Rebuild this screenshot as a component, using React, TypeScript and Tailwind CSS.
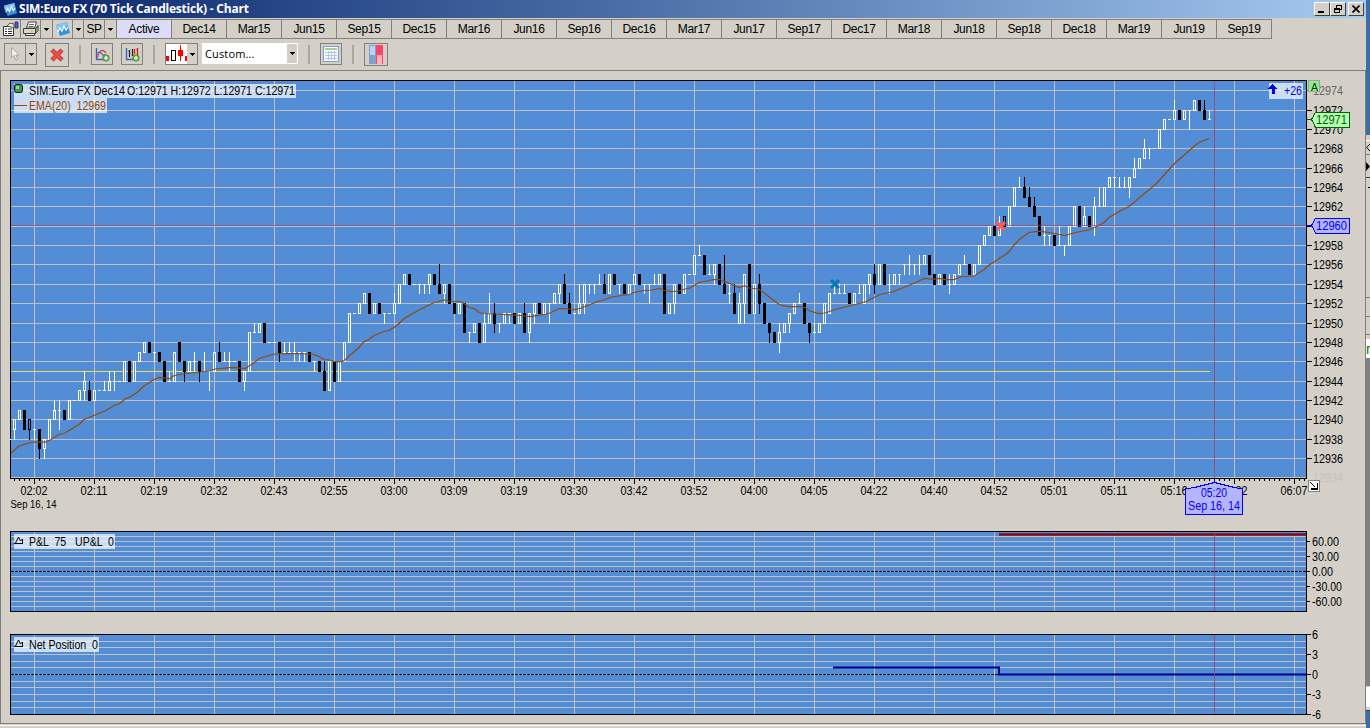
import React from 'react';

// open, high, low, close (ticks above 12900)
const CANDLES = `
39 40 38 40|40 41 40 41|41 41 39 39|39 40 38 40 b|39 39 38 39|39 39 36 37|37 38 36 38|38 40 38 40|40 42 40 41|41 42 39 41
41 41 40 40|40 42 40 42|42 42 42 42|42 43 42 43|43 45 42 44|43 44 42 42|42 43 42 43|43 43 43 43|43 44 43 43|43 45 43 44
44 45 43 44|44 44 44 44|44 46 44 46|46 46 44 44|44 46 44 46|46 47 46 47|47 48 47 48|48 48 47 47|47 47 46 47|47 47 46 46
46 46 44 44|44 45 44 44|44 47 44 47|48 48 46 46|46 46 44 45|45 46 45 46|46 47 45 46|46 46 44 45|45 47 45 45|45 45 43 45
45 47 45 47|47 48 46 46|46 47 46 46|46 47 45 46|46 46 46 46|46 46 44 44|44 45 43 45|45 49 45 49|49 50 49 49|49 50 49 50
50 50 48 48|48 48 48 48|48 48 48 48|48 48 46 47|47 48 47 47|47 48 47 47|47 48 46 47|47 47 46 47|47 47 46 47|47 47 46 46
46 46 45 46|46 46 45 45|45 46 43 43|43 46 43 46|46 46 44 44|44 46 44 46|46 48 46 48|48 51 48 51|51 51 51 51|51 52 51 52
52 53 52 53|53 53 51 51|51 52 51 52|52 52 51 51|51 51 50 51|51 51 51 51|51 53 51 52|52 54 52 54|54 55 54 55|55 55 54 54
54 54 54 54|54 54 53 54|54 54 53 54|54 55 53 55|55 55 54 54|54 56 53 53|53 54 52 54|54 54 52 52|52 52 51 51|51 52 51 52
52 52 49 49|49 49 48 49|49 50 49 50|50 50 48 48|48 51 48 50|50 53 50 51|51 52 49 50|50 50 49 50|50 51 50 51|51 51 50 51
51 51 50 50|50 51 50 51|51 52 49 49|49 51 48 51|51 52 50 52|52 52 51 51|51 52 51 52|52 52 50 52|52 53 52 53|53 54 52 54
54 55 52 52|52 53 51 51|51 51 51 51|51 54 51 52|52 54 51 54|54 54 53 54|54 54 53 54|54 55 54 54|54 55 53 53|53 55 53 55
55 55 54 54|54 54 53 54|54 54 53 53|53 54 53 54|54 55 54 55|55 55 54 54|54 54 53 54|54 54 52 54|54 55 54 54|54 55 54 55
55 55 51 51|51 52 51 52|52 54 51 54|54 54 53 53|53 55 53 55|55 55 55 55|55 57 55 57|57 58 57 57|57 57 55 55|55 56 55 55
55 56 54 56|56 56 54 54|54 57 53 53|53 54 52 53|53 54 51 51|50 53 50 52|52 55 50 55|56 56 51 51|51 54 51 54|54 55 51 52
52 52 50 50|50 50 48 49|49 49 48 48|48 50 47 49|49 50 49 50|50 51 49 51|51 52 51 52|52 53 52 52|52 52 50 50|50 50 48 49
49 50 49 49|49 50 49 50|50 52 50 52|51 53 51 53|53 54 53 53|53 54 53 53|53 54 53 53|53 53 52 52|52 53 52 53|53 54 53 53
52 54 52 54|54 55 53 55|55 56 53 54|54 56 54 56|56 56 54 54|54 55 53 54|54 55 54 55|55 55 54 55|56 56 55 56|56 57 55 56
56 56 55 56|56 57 55 56|56 57 56 57|57 57 55 55|55 55 54 54|54 55 54 55|55 55 54 54|54 55 53 54|54 55 54 55|55 56 55 56
56 57 56 56|56 56 55 55|55 56 55 56|56 58 56 58|58 59 58 59|59 60 59 60|60 60 59 59|59 61 59 60|60 61 60 61 b|60 62 60 62
62 64 62 64|64 65 64 64|64 65 63 63|63 64 62 62|62 63 61 61|61 61 59 59|59 60 58 59|59 59 58 59|59 59 58 58|58 60 58 58
58 58 57 58|58 60 58 60|60 62 60 62|62 62 60 60|60 62 60 61|61 61 60 60|60 63 59 62|62 64 62 62|62 64 62 64|64 65 64 65
65 65 64 65|64 65 64 64|64 65 64 64|64 65 63 65|65 67 65 66|66 67 66 67|67 69 67 68|68 68 67 68|68 68 68 68|68 70 68 70
70 71 70 71|71 71 71 71|71 73 71 72|72 72 71 71|71 72 71 72|72 72 70 72|72 73 72 73|73 73 72 72|72 73 71 71|71 72 71 71
`
  .trim()
  .split(/[|\n]/)
  .map((row) => {
    const [o, h, l, c, flag] = row.split(' ');
    return { o: +o, h: +h, l: +l, c: +c, dark: flag === 'b' };
  });

const EMA =
  '11,453 19,446 29,443 34,442 46,442 50,440 59,434.5 64,433.5 79,424.5 84,419.5 95,415 105,411 115,405 119,404 125,399 129,397.5 137,392.5 144,386 154,379.5 159,377.5 170,378.5 174,375.5 184,374 199,372 210,371 215,369 232,367.5 245,368.5 249,366 254,363 259,358.5 269,355.5 275,354 285,353.5 300,353.5 314,354.5 319,356.5 324,359.5 329,360 334,361.5 342,361.5 345,360 349,356 354,352 359,347.5 364,341.5 369,339.5 374,335.5 384,331.5 389,330.5 394,327.5 398,324.5 404,318.5 419,310 434,302.5 439,301.5 444,300 449,301 460,301.5 465,304 469,307.5 475,309 479,312.5 484,313.5 504,314.5 520,315.5 530,316.5 540,315.2 549,313.5 555,310.5 559,308.5 564,308.5 574,309.5 580,308.5 599,301 604,300 610,297.5 618,296 629,294.5 634,292.5 644,290.5 652,290 659,288.5 664,290.5 672,291.5 679,291 685,289 690,288 699,282.5 714,279.5 720,279.5 724,281 732,284.5 739,287.5 745,286 749,288 758,289 763,292 779,304.5 788,306.5 800,306.5 805,307.5 810,311 819,313.5 825,313 835,309.5 849,306 865,302 873,298 880,294.5 892,292 905,287 919,281 924,278.5 934,279 939,278.5 945,279.5 954,279.5 960,277 974,276 984,269.5 989,265 994,262 1000,258 1005,255 1010,250.5 1014,245 1020,239 1029,232.5 1039,231.2 1055,233.5 1065,235.5 1075,232.5 1089,230 1094,227.5 1099,225.5 1104,222.5 1109,217.5 1120,211 1129,206.5 1144,194 1157,183 1165,174 1175,163 1190,150 1195,145.5 1200,142 1209,138.5';

const TIMES = ['02:02', '02:11', '02:19', '02:32', '02:43', '02:55', '03:00', '03:09', '03:19', '03:30', '03:42', '03:52', '04:00', '04:05', '04:22', '04:40', '04:52', '05:01', '05:11', '05:16', '05:22', '06:07'];

const CONTRACTS = ['Active', 'Dec14', 'Mar15', 'Jun15', 'Sep15', 'Dec15', 'Mar16', 'Jun16', 'Sep16', 'Dec16', 'Mar17', 'Jun17', 'Sep17', 'Dec17', 'Mar18', 'Jun18', 'Sep18', 'Dec18', 'Mar19', 'Jun19', 'Sep19'];

const PLOT_LEFT = 10;
const PLOT_RIGHT = 1306;
const GRID = '#c0c0c0';
const PLOT_BG = '#538dd5';

const priceY = (p: number) => Math.floor(90.7 + (74 - p) * 9.68);

type LabelProps = {
  x: number;
  y: number;
  w: number;
  children: string;
  fill?: string;
  size?: number;
};

const Label = ({ x, y, w, children, fill = '#000', size = 12 }: LabelProps) => (
  <text x={x} y={y} fontSize={size} fill={fill} textLength={w} lengthAdjust="spacingAndGlyphs" xmlSpace="preserve">
    {children}
  </text>
);

type PlotProps = { top: number; bottom: number; rows: number[] };

const PlotGrid = ({ top, bottom, rows }: PlotProps) => (
  <>
    <rect x={PLOT_LEFT} y={top} width={PLOT_RIGHT - PLOT_LEFT + 1} height={bottom - top + 1} fill="#000" />
    <rect x={PLOT_LEFT + 1} y={top + 1} width={PLOT_RIGHT - PLOT_LEFT - 1} height={bottom - top - 1} fill={PLOT_BG} />
    {rows.map((y) => (
      <rect key={y} x={PLOT_LEFT + 1} y={y} width={PLOT_RIGHT - PLOT_LEFT - 1} height={1} fill={GRID} />
    ))}
    {TIMES.map((t, i) => (
      <rect key={t} x={34 + i * 60} y={top + 1} width={1} height={bottom - top - 1} fill={GRID} />
    ))}
  </>
);

const Cursor = ({ top, bottom }: { top: number; bottom: number }) => (
  <rect x={1214} y={top + 1} width={1} height={bottom - top} fill="#a0446c" fillOpacity={0.8} />
);

const Candle = ({ i }: { i: number }) => {
  const { o, h, l, c, dark } = CANDLES[i];
  const x = 14 + i * 5;
  const down = c < o;
  const color = down || dark ? '#000' : '#fff';
  const top = priceY(Math.max(o, c));
  const bottom = priceY(Math.min(o, c));
  const height = bottom - top + 1;
  return (
    <g fill={color}>
      <rect x={x} y={priceY(h)} width={1} height={top - priceY(h) + 1} />
      <rect x={x} y={bottom} width={1} height={priceY(l) - bottom + 1} />
      <rect x={x - 1} y={top} width={3} height={height} />
      {!down && height > 2 && <rect x={x} y={top + 1} width={1} height={height - 2} fill={PLOT_BG} />}
    </g>
  );
};

const Cross = ({ x, y, color }: { x: number; y: number; color: string }) => (
  <path d={`M${x - 3.5} ${y - 3.5}l8 8m0 -8l-8 8`} stroke={color} strokeWidth={3} fill="none" />
);

const PriceTag = ({ y, text, stroke, fill }: { y: number; text: string; stroke: string; fill: string }) => (
  <g>
    <path d={`M1307 ${y + 0.5}h4`} stroke={stroke} />
    <path d={`M1311.5 ${y + 0.5}l4 -7.5h34v15h-34z`} fill={fill} stroke={stroke} />
    <Label x={1316} y={y + 5} w={31} fill={stroke}>{text}</Label>
  </g>
);

const PriceChart = () => {
  const prices = Array.from({ length: 21 }, (_, i) => 74 - i * 2);
  return (
    <svg className="block shrink-0" width={1364} height={449} viewBox="1 71 1364 449" shapeRendering="crispEdges">
      <PlotGrid top={80} bottom={478} rows={prices.map(priceY)} />
      <rect x={11} y={371} width={1199} height={1} fill="#e6e04c" />
      <rect x={10} y={439} width={1} height={1} fill="#fff" />
      {CANDLES.map((_, i) => <Candle key={i} i={i} />)}
      <polyline points={EMA} fill="none" stroke="#914a10" strokeWidth={1.25} shapeRendering="auto" />
      <rect x={11} y={225} width={1295} height={1} fill="#a0446c" fillOpacity={0.7} />
      <Cursor top={80} bottom={477} />
      <g shapeRendering="auto">
        <Cross x={834.5} y={283.5} color="#0078b4" />
        <Cross x={1000.5} y={225.5} color="#ff5a5a" />
      </g>

      {/* legend */}
      <g fill="#fff" fillOpacity={0.7}>
        <rect x={14} y={84} width={282} height={14} />
        <rect x={14} y={98} width={93} height={15} />
        <rect x={1269} y={83} width={34} height={16} />
      </g>
      <rect x={14.5} y={84.5} width={8} height={8} rx={2} fill="#3c9a4c" stroke="#111" shapeRendering="auto" />
      <rect x={16} y={86} width={3} height={3} fill="#8fd89a" />
      <Label x={29} y={95} w={96}>SIM:Euro FX Dec14</Label>
      <Label x={127} y={95} w={168}>O:12971 H:12972 L:12971 C:12971</Label>
      <rect x={14} y={105} width={13} height={1} fill="#964b00" />
      <Label x={29} y={110} w={77} fill="#964b00">EMA(20)  12969</Label>
      <path d="M1272.5 84l5 5h-3v5h-3v-5h-4z" fill="#00f" />
      <Label x={1284} y={95} w={18} fill="#00f">+26</Label>

      {/* price axis, the label under the 12960 tag is skipped */}
      {prices.map((p, i) => (
        <g key={p}>
          {i < 20 && <rect x={1307} y={priceY(p)} width={5} height={1} fill={i ? '#000' : '#777'} />}
          {p !== 60 && (
            <Label x={1313} y={priceY(p) + (i ? 4.5 : 5)} w={30} fill={i === 0 ? '#666' : i === 20 ? '#c6c2ba' : '#000'}>
              {`129${p}`}
            </Label>
          )}
        </g>
      ))}
      <rect x={1308.5} y={80.5} width={11} height={11} fill="#90ee90" stroke="#a0a0a0" />
      <Label x={1311} y={91} w={7} size={11} fill="#064006">A</Label>
      <PriceTag y={119} text="12971" stroke="#006400" fill="#b4ffb4" />
      <PriceTag y={225} text="12960" stroke="#0000ff" fill="#b4b4ff" />

      {/* time axis */}
      {Array.from({ length: 259 }, (_, i) => (
        <rect key={i} x={14 + i * 5} y={479} width={1} height={i % 12 === 4 ? 5 : 2} fill="#000" />
      ))}
      {TIMES.map((t, i) => <Label key={t} x={20.5 + i * 60} y={495} w={27}>{t}</Label>)}
      <Label x={10.5} y={508} w={46} size={11}>Sep 16, 14</Label>
      <path d="M1214.5 482.5l20 5l8 1.5v25.5h-57v-25.5l9 -1.5z" fill="#b4b4ff" stroke="#00f" />
      <rect x={1214} y={479} width={1} height={4} fill="#00f" />
      <Label x={1201} y={497} w={26} fill="#00f">05:20</Label>
      <Label x={1188} y={510} w={52} fill="#00f">Sep 16, 14</Label>
      <rect x={1308.5} y={480.5} width={11} height={11} fill="#fff" stroke="#808080" />
      <path d="M1310.5 482.5l5 5M1317.5 483v6M1311 489h7" stroke="#000" fill="none" strokeWidth={1.3} />
    </svg>
  );
};

const StudyHeader = ({ y, w, text, textWidth }: { y: number; w: number; text: string; textWidth: number }) => (
  <g>
    <rect x={14} y={y} width={w} height={15} fill="#fff" fillOpacity={0.7} />
    <path d={`M14 ${y + 9.5}h9M15.5 ${y + 9}l3 -6l2 4l2 -2v4`} stroke="#000" fill="none" shapeRendering="auto" />
    <Label x={29} y={y + 12} w={textWidth}>{text}</Label>
  </g>
);

const ProfitChart = () => (
  <svg className="block shrink-0" width={1364} height={103} viewBox="1 520 1364 103" shapeRendering="crispEdges">
    <PlotGrid top={531} bottom={611} rows={Array.from({ length: 15 }, (_, i) => 536 + i * 5)} />
    <path d="M11 571.5H1306" stroke="#000" strokeDasharray="3 1" />
    <rect x={999} y={533} width={307} height={3} fill="#7c2a40" />
    <rect x={999} y={534} width={307} height={1} fill="#a00000" />
    <Cursor top={531} bottom={610} />
    <StudyHeader y={534} w={101} text="P&L  75   UP&L  0" textWidth={85} />
    {['60.00', '30.00', '0.00', '-30.00', '-60.00'].map((t, i) => (
      <g key={t}>
        <rect x={1307} y={541 + i * 15} width={3} height={1} />
        <Label x={1312} y={546 + i * 15} w={[27, 27, 21, 30, 30][i]}>{t}</Label>
      </g>
    ))}
  </svg>
);

const PositionChart = () => (
  <svg className="block shrink-0" width={1364} height={100} viewBox="1 623 1364 100" shapeRendering="crispEdges">
    <PlotGrid top={634} bottom={714} rows={Array.from({ length: 11 }, (_, i) => Math.floor(641 + i * 6.67))} />
    <path d="M11 674.5H999" stroke="#000" strokeDasharray="3 1" />
    <path d="M833 667.5H999V674.5H1306" stroke="#00008c" strokeWidth={2} fill="none" shapeRendering="auto" />
    <Cursor top={634} bottom={713} />
    <StudyHeader y={637} w={85} text="Net Position  0" textWidth={69} />
    {['6', '3', '0', '-3', '-6'].map((t, i) => (
      <g key={t}>
        <rect x={1307} y={634 + i * 20} width={4} height={1} />
        <Label x={1312} y={639 + i * 20} w={i > 2 ? 9 : 6}>{t}</Label>
      </g>
    ))}
  </svg>
);

const ChartLogo = ({ size = 15 }: { size?: number }) => (
  <svg width={size} height={size} viewBox="0 0 16 16">
    <path d="M1 4L12 1l3 11L5 15z" fill="#2f94d8" />
    <path d="M1 4L12 1l1 4L2 9z" fill="#7cc8f4" />
    <path d="M3 11l2-4 2 3 2-5 2 4 2-3" stroke="#fff" strokeWidth={1.3} fill="none" />
  </svg>
);

const Caret = () => (
  <svg className="shrink-0" width={5} height={3} viewBox="0 0 5 3" shapeRendering="crispEdges">
    <path d="M0 0h5v1H0zM1 1h3v1H1zM2 2h1v1H2z" />
  </svg>
);

const Separator = ({ className }: { className: string }) => <div className={`h-[19px] w-[2px] shrink-0 bg-[#a8a6a6] ${className}`} />;

const cell = 'flex shrink-0 items-center justify-center border-r border-[#808080]';
const tool = 'flex shrink-0 items-center justify-center border border-[#808080]';
const winButton = 'flex h-[14px] w-[16px] items-center justify-center border border-t-white border-l-white border-r-[#404040] border-b-[#404040] bg-[#d4d0c8]';

const TitleBar = () => (
  <div className="flex h-[18px] items-center bg-linear-to-r from-[#0a246a] to-[#a6caf0] pl-[3px] pr-[2px]">
    <ChartLogo />
    <span className="ml-px whitespace-nowrap font-['Open_Sans',sans-serif] text-[12px] font-bold leading-[18px] tracking-[-0.23px] text-white">
      SIM:Euro FX (70 Tick Candlestick) - Chart
    </span>
    <div className="ml-auto flex">
      <div className={winButton}><span className="mt-[6px] mr-[2px] h-[2px] w-[6px] bg-black" /></div>
      <div className={winButton}>
        <svg width={10} height={10} viewBox="0 0 10 10" fill="none" stroke="#000" shapeRendering="crispEdges">
          <path d="M3.5 4V1.5h5v4H7M3 1.5h6M1.5 4.5h5v4h-5zM1 5h6" />
        </svg>
      </div>
      <div className={`${winButton} ml-[2px]`}>
        <svg width={8} height={8} viewBox="0 0 8 8"><path d="M0.5 0.5l7 7m0-7l-7 7" stroke="#000" strokeWidth={1.6} /></svg>
      </div>
    </div>
  </div>
);

const ContractBar = () => (
  <div className="mt-px flex h-[20px] w-[1272px] border-y border-[#808080] text-[12px]">
    <div className={`${cell} w-[21px]`}>
      <svg width={17} height={16} viewBox="0 0 17 16" fill="none" stroke="#333">
        <path d="M1.5 5.5h10v9h-10z" fill="#fff" />
        <path d="M3 8h2M6 8h4M3 10.5h2M6 10.5h4M3 12.5h2M6 12.5h4" />
        <path d="M5 5l3-3 4 1v4l-3-1z" fill="#f4e8c8" strokeWidth={0.8} />
        <path d="M13 1h3v6h-3z" fill="#5058b0" stroke="#303890" />
      </svg>
    </div>
    <div className={`${cell} w-[20px]`}>
      <svg width={17} height={16} viewBox="0 0 17 16" fill="none" stroke="#404040">
        <path d="M4.5 7l2-6h8l-2 6z" fill="#fff" />
        <path d="M7 3.5h5M6.5 5.5h5" strokeWidth={0.8} />
        <path d="M1.5 7.5h12v5h-12z" fill="#d8d8d0" />
        <path d="M13.5 7.5l2.5-3v5l-2.5 3z" fill="#a0a098" />
        <path d="M3.5 12.5h9v2h-9z" fill="#f0f0e8" />
        <path d="M8 10h3" stroke="#d8c000" />
      </svg>
    </div>
    <div className={`${cell} w-[12px]`}><Caret /></div>
    <div className={`${cell} w-[20px]`}><ChartLogo size={16} /></div>
    <div className={`${cell} w-[11px]`}><Caret /></div>
    <div className={`${cell} w-[21px] tracking-[-0.5px]`}>SP</div>
    <div className={`${cell} w-[12px]`}><Caret /></div>
    {CONTRACTS.map((name, i) => (
      <div key={name} className={`${cell} w-[55px] ${i === 0 ? 'bg-[#dcdcf8]' : ''}`}>
        <span className="tracking-[-0.3px]">{name}</span>
      </div>
    ))}
  </div>
);

const PlusBadge = () => (
  <g>
    <circle cx={11} cy={11} r={3.3} fill="#6cb048" stroke="#3c7c28" strokeWidth={0.6} />
    <path d="M11 9v4M9 11h4" stroke="#fff" strokeWidth={1.2} />
  </g>
);

const Toolbar = () => (
  <div className="flex h-[31px] items-start pt-[4px] pl-[4px]">
    <div className={`${tool} h-[22px] w-[33px]`}>
      <div className="flex h-full w-[21px] items-center justify-center border-r border-[#808080]">
        <svg width={9} height={14} viewBox="0 0 9 14">
          <path d="M0.5 0.5v10.5l2.5-2.5 2 4.5 1.8-0.8-2-4.2h3.5z" fill="#f0eeec" stroke="#a8a6a4" />
        </svg>
      </div>
      <div className="flex flex-1 justify-center"><Caret /></div>
    </div>
    <div className={`${tool} ml-[8px] h-[24px] w-[24px]`}>
      <svg width={14} height={14} viewBox="0 0 14 14" fill="none">
        <path d="M2 2l10 10M12 2L2 12" stroke="#a83030" strokeWidth={4.4} />
        <path d="M2.4 2.4l9.2 9.2M11.6 2.4l-9.2 9.2" stroke="#ec4c4c" strokeWidth={3} />
      </svg>
    </div>
    <Separator className="ml-[10px] mt-[2px]" />
    <div className={`${tool} ml-[10px] h-[22px] w-[22px]`}>
      <svg width={15} height={15} viewBox="0 0 15 15" fill="none">
        <path d="M1.5 1v11.5H12" stroke="#3468b8" strokeWidth={1.4} />
        <path d="M2 11c2-7 5-10 9-5" stroke="#e04040" strokeWidth={1.4} />
        <path d="M2 6l3-1 3 3 3 0" stroke="#4080d0" strokeWidth={1.3} />
        <PlusBadge />
      </svg>
    </div>
    <div className={`${tool} ml-[8px] h-[22px] w-[22px]`}>
      <svg width={15} height={15} viewBox="0 0 15 15" fill="none">
        <path d="M1.5 1v11.5H8" stroke="#3468b8" strokeWidth={1.4} />
        <path d="M4.5 3v7M3.5 4h1M7.5 2v7M7.5 8h1" stroke="#202020" strokeWidth={1.2} />
        <path d="M9.5 2v5M12.5 1v7M11.5 3h1" stroke="#d02020" strokeWidth={1.3} />
        <PlusBadge />
      </svg>
    </div>
    <Separator className="ml-[10px] mt-[2px]" />
    <div className={`${tool} ml-[10px] h-[22px] w-[33px]`}>
      <svg className="bg-white" width={21} height={20} viewBox="166 44 21 20" shapeRendering="crispEdges">
        <path d="M166 56h3v5h-3zM185 56h2v5h-2zM178 50h5v6h-5zM180 45h1v16h-1z" fill="#f00" />
        <rect x={171.5} y={50.5} width={4} height={10} fill="#fff" stroke="#000" />
      </svg>
      <div className="flex flex-1 justify-center"><Caret /></div>
    </div>
    <div className="ml-[4px] flex h-[21px] w-[96px] shrink-0 items-center bg-white p-px">
      <span className="flex-1 pl-[2px] font-['Open_Sans',sans-serif] text-[11px] leading-none tracking-[0.15px]">Custom...</span>
      <div className="flex h-[19px] w-[10px] items-center justify-center bg-[#d4d0c8]"><Caret /></div>
    </div>
    <Separator className="ml-[10px] mt-[2px]" />
    <div className={`${tool} ml-[10px] h-[22px] w-[22px]`}>
      <svg width={16} height={16} viewBox="0 0 16 16" shapeRendering="crispEdges">
        <rect x={0.5} y={0.5} width={15} height={15} rx={1} fill="#f4f8ff" stroke="#7ca0cc" />
        <rect x={2} y={2} width={12} height={2} fill="#a8d08c" />
        <path d="M2 6.5h12M2 9.5h12M2 12.5h12M5.5 5v9M8.5 5v9M11.5 5v9" stroke="#b0c8e4" />
      </svg>
    </div>
    <Separator className="ml-[10px] mt-[2px]" />
    <div className={`${tool} ml-[10px] h-[23px] w-[24px]`}>
      <svg width={14} height={19} viewBox="0 0 14 19" shapeRendering="crispEdges">
        <rect width={14} height={19} fill="#80a0d0" />
        <path d="M1 1h5v9H1z" fill="#b8d4f4" />
        <path d="M7 0h7v10H7z" fill="#ff4468" />
        <path d="M7 10h7v9H7z" fill="#fcb0bc" />
        <path d="M7 10h1v9H7zM13 10h1v9h-1z" fill="#ff4468" />
      </svg>
    </div>
  </div>
);

// Sliver of the windows that sit behind the chart window
const BackgroundStrip = () => (
  <div className="flex w-[4px] shrink-0 flex-col overflow-hidden bg-[#d4d0c8]">
    <div className="h-[135px] bg-[#3a6ea5]" />
    <div className="h-[6px] border-b border-white" />
    <div className="flex h-[14px] items-center border-b border-[#808080]">
      <svg width={4} height={9} viewBox="0 0 4 9"><path d="M4 1L0.5 4.5L4 8" stroke="#000" fill="none" /></svg>
    </div>
    <div className="flex h-[23px] items-center border-b border-[#404040]">
      <svg width={4} height={9} viewBox="0 0 4 9"><path d="M0 0l4 4.5L0 9z" fill="#000" /></svg>
    </div>
    <div className="flex h-[10px] justify-end"><span className="h-full w-[2px] border-b border-black" /></div>
    <div className="h-[110px] border-b border-[#808080]" />
    <div className="h-[19px] border-b border-[#808080]" />
    <div className="h-[18px] border-b border-[#808080]" />
    <div className="mt-[4px] h-[19px] bg-white text-[14px] leading-[20px] text-[#008000]">r</div>
    <div className="h-[328px] bg-[#808080]" />
    <div className="mt-px h-[20px] bg-white" />
    <div className="h-[4px] border-b border-[#404040]" />
    <div className="flex-1 bg-[#3a6ea5]" />
  </div>
);

export default function App() {
  return (
    <div className="flex h-[728px] w-[1370px] overflow-hidden bg-[#d4d0c8] font-['Liberation_Sans',Arial,sans-serif] text-black">
      <div className="flex w-[1366px] shrink-0 flex-col">
        <TitleBar />
        <ContractBar />
        <Toolbar />
        <div className="flex h-[654px] shrink-0 flex-col border border-[#808080]">
          <PriceChart />
          <ProfitChart />
          <PositionChart />
        </div>
        <div className="mt-px h-px bg-white" />
      </div>
      <BackgroundStrip />
    </div>
  );
}
